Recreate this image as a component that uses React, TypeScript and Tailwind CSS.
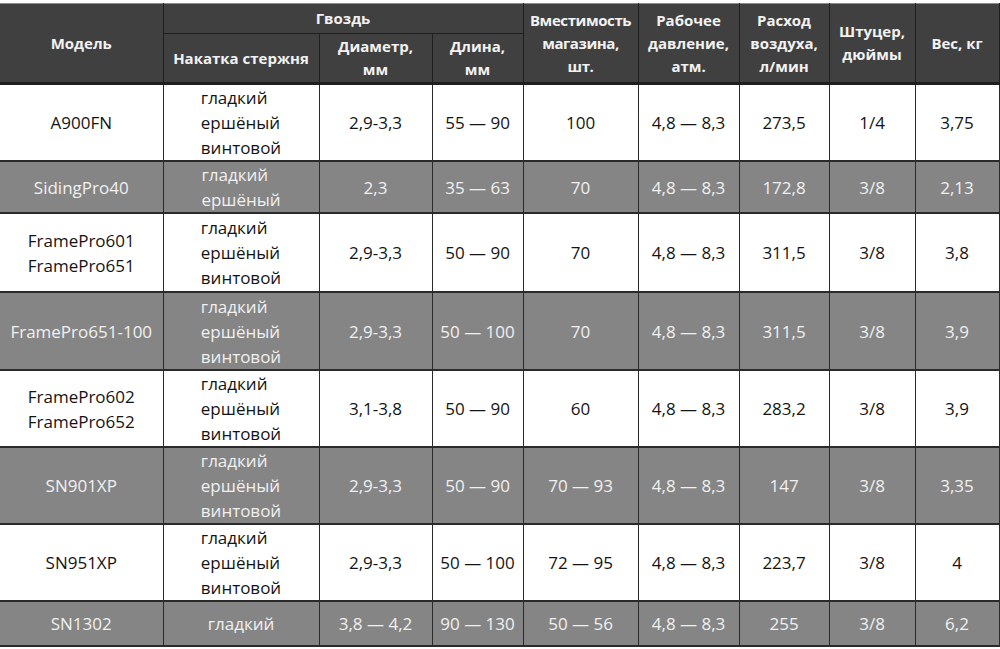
const rows = [
  { model: ['A900FN'], knurl: ['гладкий', 'ершёный', 'винтовой'], dia: '2,9-3,3', len: '55 — 90', cap: '100', press: '4,8 — 8,3', air: '273,5', fit: '1/4', weight: '3,75', dark: false, h: 'h-[75px]' },
  { model: ['SidingPro40'], knurl: ['гладкий', 'ершёный'], dia: '2,3', len: '35 — 63', cap: '70', press: '4,8 — 8,3', air: '172,8', fit: '3/8', weight: '2,13', dark: true, h: 'h-[48px]' },
  { model: ['FramePro601', 'FramePro651'], knurl: ['гладкий', 'ершёный', 'винтовой'], dia: '2,9-3,3', len: '50 — 90', cap: '70', press: '4,8 — 8,3', air: '311,5', fit: '3/8', weight: '3,8', dark: false, h: 'h-[79px]' },
  { model: ['FramePro651-100'], knurl: ['гладкий', 'ершёный', 'винтовой'], dia: '2,9-3,3', len: '50 — 100', cap: '70', press: '4,8 — 8,3', air: '311,5', fit: '3/8', weight: '3,9', dark: true, h: 'h-[78px]' },
  { model: ['FramePro602', 'FramePro652'], knurl: ['гладкий', 'ершёный', 'винтовой'], dia: '3,1-3,8', len: '50 — 90', cap: '60', press: '4,8 — 8,3', air: '283,2', fit: '3/8', weight: '3,9', dark: false, h: 'h-[72px]' },
  { model: ['SN901XP'], knurl: ['гладкий', 'ершёный', 'винтовой'], dia: '2,9-3,3', len: '50 — 90', cap: '70 — 93', press: '4,8 — 8,3', air: '147', fit: '3/8', weight: '3,35', dark: true, h: 'h-[75px]' },
  { model: ['SN951XP'], knurl: ['гладкий', 'ершёный', 'винтовой'], dia: '2,9-3,3', len: '50 — 100', cap: '72 — 95', press: '4,8 — 8,3', air: '223,7', fit: '3/8', weight: '4', dark: false, h: 'h-[73px]' },
  { model: ['SN1302'], knurl: ['гладкий'], dia: '3,8 — 4,2', len: '90 — 130', cap: '50 — 56', press: '4,8 — 8,3', air: '255', fit: '3/8', weight: '6,2', dark: true, h: 'h-[45px]' },
]

const th = 'border-r border-b border-[#1f1f1f] px-1 text-center align-middle font-bold leading-[23px]'
const td = 'border-r border-b-2 border-[#2a2a2a] px-1 text-center align-middle leading-[25px]'

export default function App() {
  return (
    <div className="h-[649px] w-[1000px] overflow-hidden bg-white pt-[3px] font-['Open_Sans',sans-serif]">
      <table className="w-[999px] table-fixed border-collapse border-t border-[#8a8a8a]">
        <colgroup>
          <col className="w-[163px]" />
          <col className="w-[156px]" />
          <col className="w-[113px]" />
          <col className="w-[91px]" />
          <col className="w-[115px]" />
          <col className="w-[101px]" />
          <col className="w-[90px]" />
          <col className="w-[86px]" />
          <col className="w-[84px]" />
        </colgroup>
        <thead className="bg-[#404040] text-[15px] text-[#f2f2f2]">
          <tr className="h-[30px]">
            <th rowSpan={2} className={`${th} border-b-[3px]`}>Модель</th>
            <th colSpan={3} className={th}>Гвоздь</th>
            <th rowSpan={2} className={`${th} border-b-[3px] tracking-[-0.4px]`}>
              Вместимость магазина, шт.
            </th>
            <th rowSpan={2} className={`${th} border-b-[3px]`}>
              Рабочее давление, атм.
            </th>
            <th rowSpan={2} className={`${th} border-b-[3px]`}>
              Расход воздуха, л/мин
            </th>
            <th rowSpan={2} className={`${th} border-b-[3px]`}>
              Штуцер, дюймы
            </th>
            <th rowSpan={2} className={`${th} border-b-[3px]`}>Вес, кг</th>
          </tr>
          <tr className="h-[50px]">
            <th className={`${th} border-b-[3px] whitespace-nowrap px-0`}>Накатка стержня</th>
            <th className={`${th} border-b-[3px]`}>Диаметр, мм</th>
            <th className={`${th} border-b-[3px]`}>Длина, мм</th>
          </tr>
        </thead>
        <tbody className="text-[17px]">
          {rows.map((r, i) => (
            <tr
              key={i}
              className={`${r.h} ${r.dark ? 'bg-[#858585] text-[#f0f0f0]' : 'bg-white text-[#141414]'}`}
            >
              <td className={`${td} whitespace-nowrap px-0`}>
                {r.model.map((m) => (
                  <div key={m}>{m}</div>
                ))}
              </td>
              <td className={td}>
                <div className="inline-block text-left">
                  {r.knurl.map((k) => (
                    <div key={k}>{k}</div>
                  ))}
                </div>
              </td>
              <td className={td}>{r.dia}</td>
              <td className={`${td} whitespace-nowrap px-0`}>{r.len}</td>
              <td className={`${td} whitespace-nowrap`}>{r.cap}</td>
              <td className={`${td} whitespace-nowrap px-0`}>{r.press}</td>
              <td className={td}>{r.air}</td>
              <td className={td}>{r.fit}</td>
              <td className={td}>{r.weight}</td>
            </tr>
          ))}
        </tbody>
      </table>
    </div>
  )
}
